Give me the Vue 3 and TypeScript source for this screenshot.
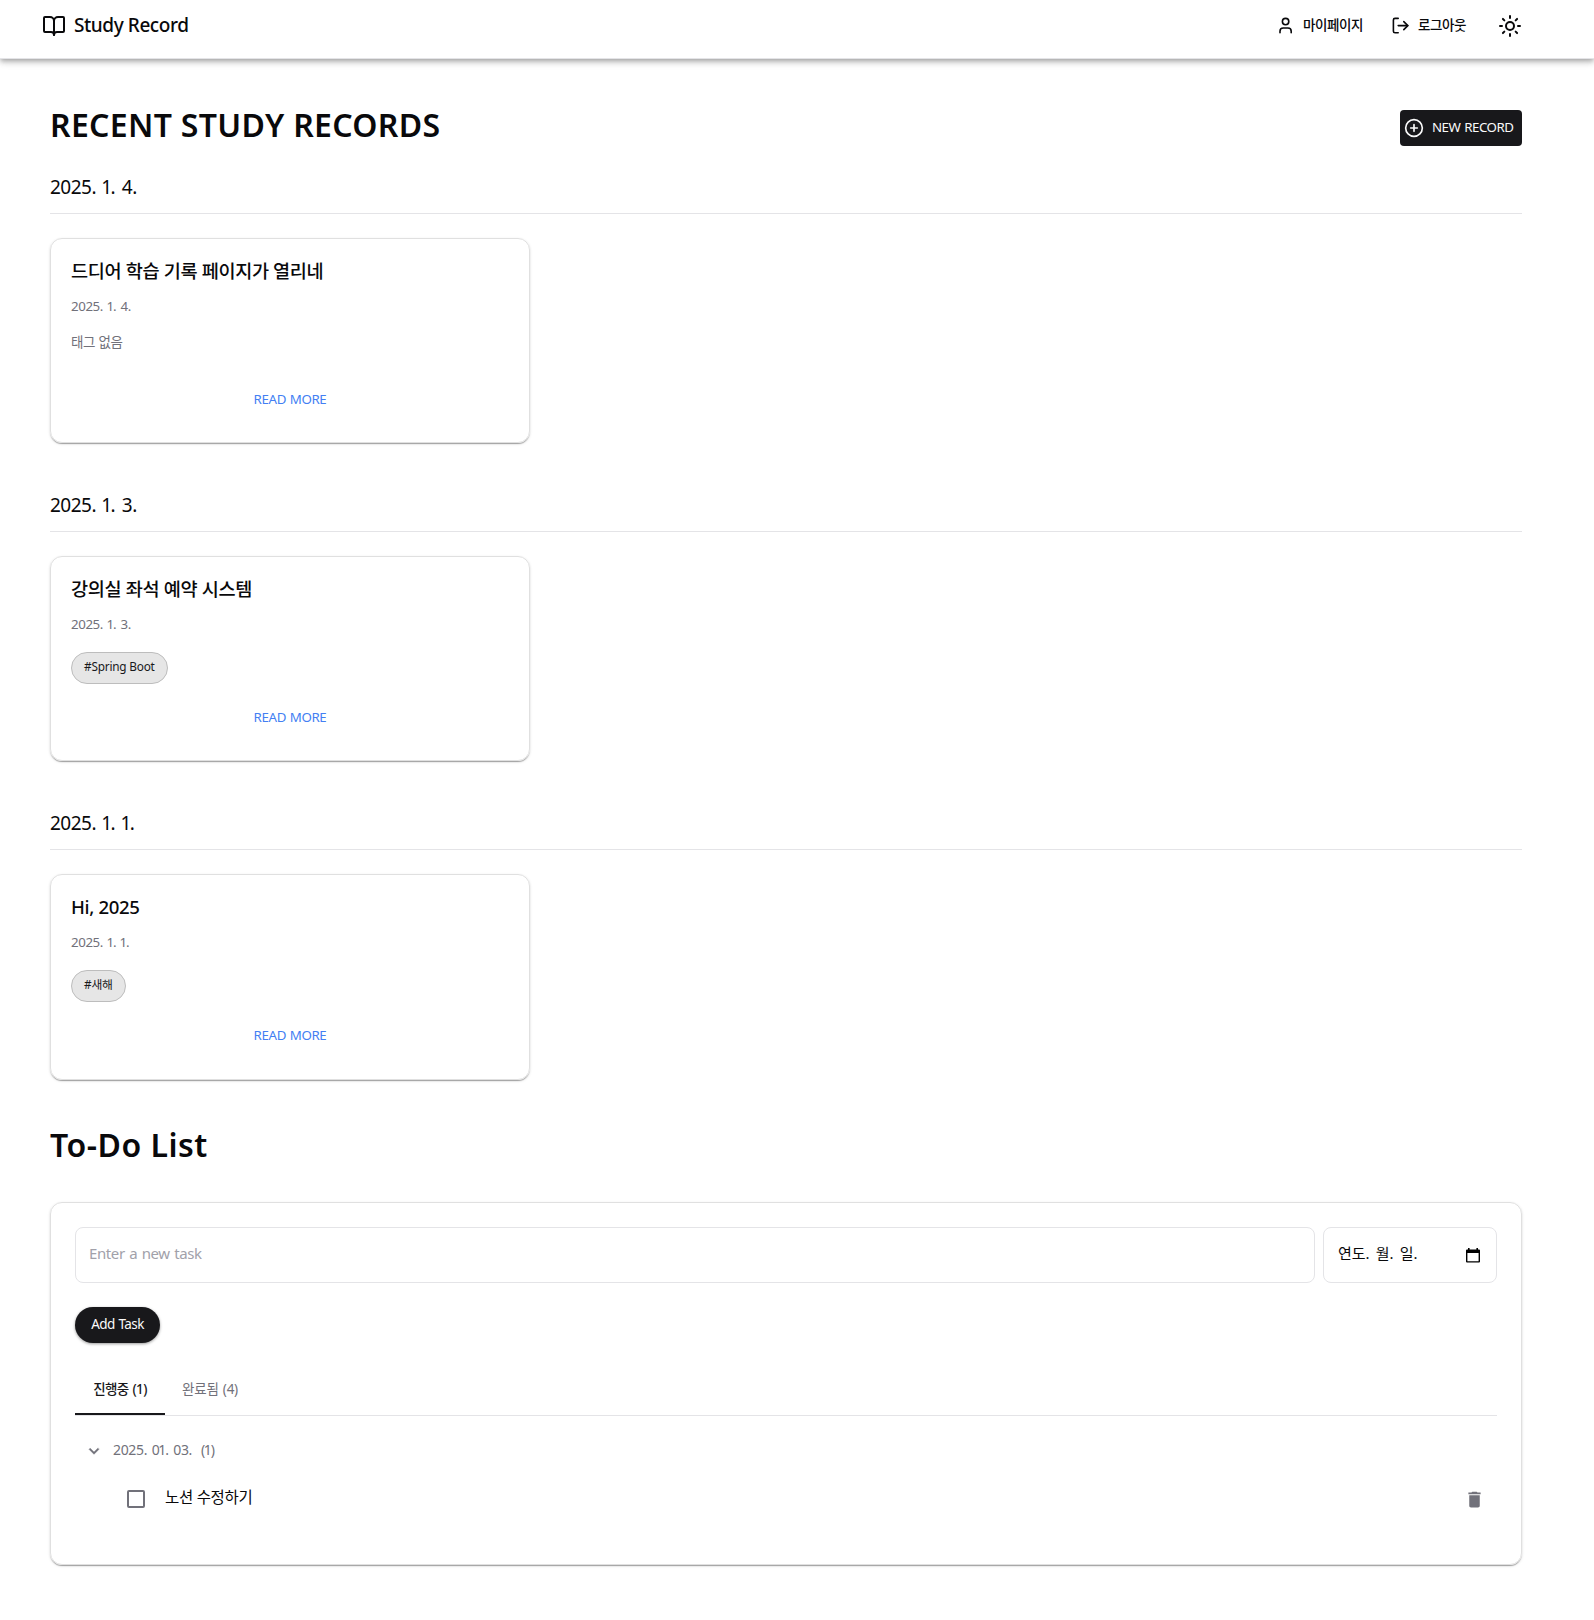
<script setup lang="ts">
interface StudyRecord {
  date: string
  title: string
  tag?: string
}

const records: StudyRecord[] = [
  { date: '2025. 1. 4.', title: '드디어 학습 기록 페이지가 열리네' },
  { date: '2025. 1. 3.', title: '강의실 좌석 예약 시스템', tag: '#Spring Boot' },
  { date: '2025. 1. 1.', title: 'Hi, 2025', tag: '#새해' },
]

// Splits a date around each digit 1, which is set proportionally.
const digits = (date: string): string[] => date.split(/(1)/).filter(Boolean)
</script>

<template>
  <div class="page">
    <header class="topbar">
      <a class="brand">
        <svg class="i24" viewBox="0 0 24 24"><path d="M12 7v14" /><path d="M3 18a1 1 0 0 1-1-1V4a1 1 0 0 1 1-1h5a4 4 0 0 1 4 4 4 4 0 0 1 4-4h5a1 1 0 0 1 1 1v13a1 1 0 0 1-1 1h-6a3 3 0 0 0-3 3 3 3 0 0 0-3-3z" /></svg>
        <span class="brand-name">Study Record</span>
      </a>
      <nav class="nav">
        <a class="nav-link mypage">
          <svg class="i19" viewBox="0 0 24 24"><path d="M19 21v-2a4 4 0 0 0-4-4H9a4 4 0 0 0-4 4v2" /><circle cx="12" cy="7" r="4" /></svg>
          <span>마이페이지</span>
        </a>
        <a class="nav-link logout">
          <svg class="i19" viewBox="0 0 24 24"><path d="M9 21H5a2 2 0 0 1-2-2V5a2 2 0 0 1 2-2h4" /><path d="m16 17 5-5-5-5" /><path d="M21 12H9" /></svg>
          <span>로그아웃</span>
        </a>
        <svg class="i24" viewBox="0 0 24 24"><circle cx="12" cy="12" r="4" /><path d="M12 2v2M12 20v2M4.93 4.93l1.41 1.41M17.66 17.66l1.41 1.41M2 12h2M20 12h2M6.34 17.66l-1.41 1.41M19.07 4.93l-1.41 1.41" /></svg>
      </nav>
    </header>

    <main class="content">
      <div class="head">
        <h1 class="title">RECENT STUDY RECORDS</h1>
        <button class="new">
          <svg class="i20" viewBox="0 0 24 24"><circle cx="12" cy="12" r="10" /><path d="M8 12h8M12 8v8" /></svg>
          <span>NEW RECORD</span>
        </button>
      </div>

      <section v-for="r in records" :key="r.date" class="group">
        <h2 class="day"><span v-for="(p, i) in digits(r.date)" :key="i" :class="{ one: p === '1' }">{{ p }}</span></h2>
        <div class="grid">
          <article class="card">
            <h3 class="card-title">{{ r.title }}</h3>
            <p class="card-date"><span v-for="(p, i) in digits(r.date)" :key="i" :class="{ one: p === '1' }">{{ p }}</span></p>
            <div class="tags">
              <span v-if="r.tag" class="chip">{{ r.tag }}</span>
              <span v-else class="none">태그 없음</span>
            </div>
            <a class="more">READ MORE</a>
          </article>
        </div>
      </section>

      <h1 class="title todo-title">To-Do List</h1>
      <section class="todo">
        <div class="fields">
          <div class="field grow"><span class="ph">Enter a new task</span></div>
          <div class="field date">
            <span class="ymd">연도. 월. 일.</span>
            <svg class="cal" viewBox="0 0 14 15"><path fill-rule="evenodd" d="M2 0h1.6v1.4h6.8V0H12v1.4h1A1 1 0 0 1 14 2.4V13.6a1 1 0 0 1-1 1H1a1 1 0 0 1-1-1V2.4a1 1 0 0 1 1-1h1zM1.4 5v8.2h11.2V5z" /></svg>
          </div>
        </div>
        <button class="add"><span>Add Task</span></button>
        <div class="tabs">
          <div class="tab on">진행중 (1)</div>
          <div class="tab">완료됨 (4)</div>
        </div>
        <div class="due">
          <svg class="chev" viewBox="0 0 24 24"><path d="M16.59 8.59 12 13.17 7.41 8.59 6 10l6 6 6-6z" /></svg>
          <span class="due-date"><span v-for="(p, i) in digits('2025. 01. 03.')" :key="i" :class="{ one: p === '1' }">{{ p }}</span></span>
          <span class="count">(<span class="one">1</span>)</span>
        </div>
        <div class="task">
          <i class="box"></i>
          <span class="task-name">노션 수정하기</span>
          <svg class="trash" viewBox="0 0 24 24"><path d="M6 19c0 1.1.9 2 2 2h8c1.1 0 2-.9 2-2V7H6zM19 4h-3.5l-1-1h-5l-1 1H5v2h14z" /></svg>
        </div>
      </section>
    </main>
  </div>
</template>

<style>
body { margin: 0; background: #fff; }
</style>

<style scoped>
.page { height: 1620px; overflow: hidden; color: #09090b; font: 14px/20px "Noto Sans", "Noto Sans CJK KR", sans-serif; box-sizing: border-box; }
.page * { box-sizing: border-box; }
h1, h2, h3, p { margin: 0; }
button { border: 0; font: inherit; padding: 0; }
svg { display: block; flex: none; fill: none; stroke: currentColor; stroke-width: 2; stroke-linecap: round; stroke-linejoin: round; }
.i24 { width: 24px; height: 24px; }
.i19 { width: 19.2px; height: 19.2px; }
.i20 { width: 20px; height: 20px; }
.one { margin-left: -0.075em; letter-spacing: -0.085em; }

.topbar { height: 59px; padding: 0 72px 7px 42px; display: flex; align-items: center; justify-content: space-between; border-bottom: 1px solid #e4e4e7; box-shadow: 0 2px 4px -1px rgba(0,0,0,.2), 0 4px 5px 0 rgba(0,0,0,.14), 0 1px 10px 0 rgba(0,0,0,.12); }
.brand, .nav, .nav-link { display: flex; align-items: center; gap: 8px; }
.brand-name { font-size: 19px; font-weight: 500; letter-spacing: -.43px; padding-bottom: 2px; }
.nav { gap: 0; }
.nav-link { font-size: 13.5px; font-weight: 500; letter-spacing: -.45px; }
.nav-link span { padding-bottom: 2px; margin-left: -.6px; }
.mypage { width: 115px; }
.logout { width: 106.6px; }

.content { padding: 51px 72px 0 50px; }
.head { display: flex; justify-content: space-between; height: 51px; }
.title { font-size: 32px; line-height: 29px; font-weight: 600; letter-spacing: .32px; }
.new { width: 122px; height: 36px; border-radius: 4px; background: #18181b; color: #fafafa; display: flex; align-items: center; padding-left: 4px; gap: 8px; font-size: 13.3px; letter-spacing: -.5px; word-spacing: 1px; white-space: nowrap; }
.new span { padding-bottom: 3px; }

.group { height: 318.08px; }
.day { height: 53px; font-size: 19px; line-height: 53px; font-weight: 400; letter-spacing: -.5px; word-spacing: 2.2px; border-bottom: 1px solid #e4e4e7; margin-bottom: 24px; }
.grid { display: grid; grid-template-columns: repeat(3, 1fr); gap: 16px; }
.card, .todo { border: 1px solid #e0e0e0; border-radius: 12px; box-shadow: 0 2px 1px -1px rgba(0,0,0,.2), 0 1px 1px 0 rgba(0,0,0,.14), 0 1px 3px 0 rgba(0,0,0,.12); }
.card { height: 205.4px; padding: 20px; }
.card-title { font-size: 18.6px; line-height: 24px; font-weight: 500; letter-spacing: -.36px; }
.card-date { margin-top: 13px; color: #71717a; font-size: 13.3px; letter-spacing: -.4px; word-spacing: 1.4px; }
.tags { height: 32px; margin-top: 18px; display: flex; }
.chip { height: 32px; padding: 0 12px; border: 1px solid #bdbdbd; background: #e6e6e6; color: #18181b; border-radius: 16px; font-size: 11.8px; line-height: 27px; letter-spacing: -.2px; }
.none { color: #71717a; font-size: 13.5px; line-height: 17px; letter-spacing: -.3px; }
.more { display: block; text-align: center; margin-top: 23px; color: #437ff3; font-size: 13.3px; letter-spacing: -.35px; word-spacing: .5px; }

.todo-title { height: 87px; line-height: 60px; letter-spacing: .5px; }
.todo { height: 363px; padding: 24px; }
.fields { display: flex; gap: 8px; }
.field { height: 56px; border: 1px solid #e4e4e7; border-radius: 8px; padding: 0 13px; font-size: 15px; display: flex; align-items: center; }
.field span { padding-bottom: 5px; }
.grow { flex: 1; }
.date { width: 174px; justify-content: space-between; padding-right: 16px; }
.ph { color: #a1a1aa; letter-spacing: -.4px; word-spacing: 1px; }
.ymd { word-spacing: 2.2px; padding-left: 1px; }
.cal { width: 14px; height: 15px; fill: #000; stroke: none; }
.add { display: flex; justify-content: center; align-items: center; width: 85px; height: 36px; margin-top: 24px; border-radius: 18px; background: #18181b; color: #fafafa; font-size: 13.5px; letter-spacing: -.6px; word-spacing: 1px; box-shadow: 0 1px 3px rgba(0,0,0,.4); }
.add span { padding-bottom: 3px; }
.tabs { display: flex; height: 49px; margin-top: 24px; border-bottom: 1px solid #e4e4e7; }
.tab { width: 90px; line-height: 45px; text-align: center; color: #71717a; font-size: 13.5px; letter-spacing: -.25px; word-spacing: 1px; }
.on { color: #18181b; font-weight: 500; letter-spacing: -.6px; border-bottom: 2px solid #18181b; }
.due { display: flex; align-items: center; margin-top: 24px; color: #71717a; padding-left: 9px; gap: 9px; }
.due-date, .count { padding-bottom: 2px; letter-spacing: -.35px; word-spacing: 1.4px; }
.chev, .trash { width: 20px; height: 20px; fill: #71717a; stroke: none; }
.chev { stroke: #71717a; stroke-width: .5; }
.task { display: flex; align-items: center; margin-top: 25px; padding-left: 52px; font-size: 15.5px; }
.task-name { padding-bottom: 4px; letter-spacing: -.3px; }
.box { width: 18px; height: 18px; border: 2px solid #71717a; border-radius: 2px; margin-right: 20px; }
.trash { width: 21px; height: 21px; margin-left: auto; margin-right: 12.5px; }
</style>
